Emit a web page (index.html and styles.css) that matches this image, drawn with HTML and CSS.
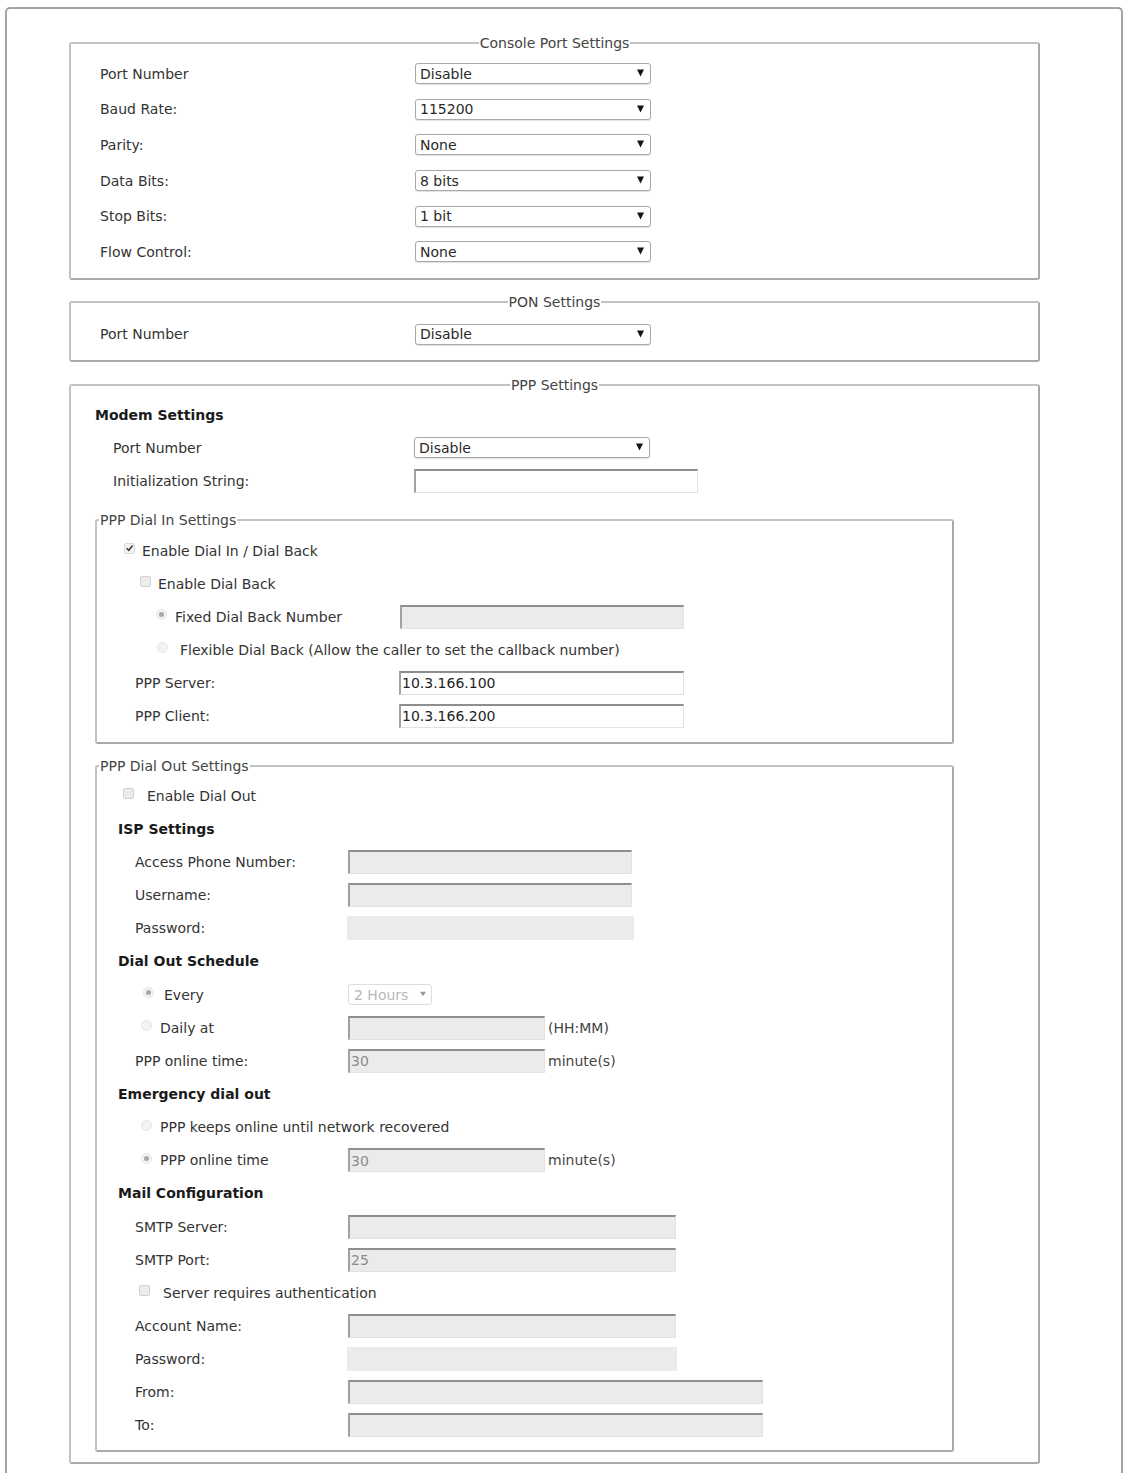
FILE: index.html
```html
<!DOCTYPE html>
<html lang="en">
<head>
<meta charset="utf-8">
<title>Serial Settings</title>
<link rel="stylesheet" href="styles.css">
</head>
<body>
<div class="page">

  <fieldset class="group console">
    <legend class="center">Console Port Settings</legend>
    <div class="row r-c"><span class="lbl lw-c">Port Number</span><span class="sel"><select><option>Disable</option></select><svg class="arr" viewBox="0 0 7 8"><path d="M0 0.5H7L3.5 7.5Z"/></svg></span></div>
    <div class="row r-c"><span class="lbl lw-c">Baud Rate:</span><span class="sel"><select><option>115200</option></select><svg class="arr" viewBox="0 0 7 8"><path d="M0 0.5H7L3.5 7.5Z"/></svg></span></div>
    <div class="row r-c"><span class="lbl lw-c">Parity:</span><span class="sel"><select><option>None</option></select><svg class="arr" viewBox="0 0 7 8"><path d="M0 0.5H7L3.5 7.5Z"/></svg></span></div>
    <div class="row r-c"><span class="lbl lw-c">Data Bits:</span><span class="sel"><select><option>8 bits</option></select><svg class="arr" viewBox="0 0 7 8"><path d="M0 0.5H7L3.5 7.5Z"/></svg></span></div>
    <div class="row r-c"><span class="lbl lw-c">Stop Bits:</span><span class="sel"><select><option>1 bit</option></select><svg class="arr" viewBox="0 0 7 8"><path d="M0 0.5H7L3.5 7.5Z"/></svg></span></div>
    <div class="row r-c"><span class="lbl lw-c">Flow Control:</span><span class="sel"><select><option>None</option></select><svg class="arr" viewBox="0 0 7 8"><path d="M0 0.5H7L3.5 7.5Z"/></svg></span></div>
  </fieldset>

  <fieldset class="group pon">
    <legend class="center">PON Settings</legend>
    <div class="row r-c"><span class="lbl lw-c">Port Number</span><span class="sel"><select><option>Disable</option></select><svg class="arr" viewBox="0 0 7 8"><path d="M0 0.5H7L3.5 7.5Z"/></svg></span></div>
  </fieldset>

  <fieldset class="group ppp">
    <legend class="center">PPP Settings</legend>
    <div class="row r-p head flush">Modem Settings</div>
    <div class="row r-p"><span class="lbl lw-m">Port Number</span><span class="sel"><select><option>Disable</option></select><svg class="arr" viewBox="0 0 7 8"><path d="M0 0.5H7L3.5 7.5Z"/></svg></span></div>
    <div class="row r-p"><span class="lbl lw-m">Initialization String:</span><input class="inp w284" type="text" value=""></div>

    <fieldset class="sub dial-in">
      <legend class="left">PPP Dial In Settings</legend>
      <div class="row r-p"><span class="lbl i27"><span class="cb on g7"><svg viewBox="0 0 10 10"><path d="M1.8 5.2L4.2 7.6L8.4 2.2"/></svg></span>Enable Dial In / Dial Back</span></div>
      <div class="row r-p"><span class="lbl i43"><span class="cb g7"></span>Enable Dial Back</span></div>
      <div class="row r-p"><span class="lbl lw-303 i59"><span class="rb on g8"></span>Fixed Dial Back Number</span><input class="inp w284" type="text" value="" disabled></div>
      <div class="row r-p"><span class="lbl i60"><span class="rb g12"></span>Flexible Dial Back (Allow the caller to set the callback number)</span></div>
      <div class="row r-p"><span class="lbl lw-302 i38">PPP Server:</span><input class="inp w285" type="text" value="10.3.166.100"></div>
      <div class="row r-p"><span class="lbl lw-302 i38">PPP Client:</span><input class="inp w285" type="text" value="10.3.166.200"></div>
    </fieldset>

    <fieldset class="sub dial-out">
      <legend class="left">PPP Dial Out Settings</legend>
      <div class="row r-o"><span class="lbl i26"><span class="cb g13"></span>Enable Dial Out</span></div>
      <div class="row r-o head">ISP Settings</div>
      <div class="row r-o"><span class="lbl lw-o i38">Access Phone Number:</span><input class="inp w284" type="text" value="" disabled></div>
      <div class="row r-o"><span class="lbl lw-o i38">Username:</span><input class="inp w284" type="text" value="" disabled></div>
      <div class="row r-o"><span class="lbl lw-o i38">Password:</span><input class="inp pw w287" type="password" value="" disabled></div>
      <div class="row r-o head">Dial Out Schedule</div>
      <div class="row r-o"><span class="lbl lw-o i46"><span class="rb on g10"></span>Every</span><span class="sel small"><select disabled><option>2 Hours</option></select><svg class="arr" viewBox="0 0 7 8"><path d="M0 1.5H7L3.5 6.5Z"/></svg></span></div>
      <div class="row r-o"><span class="lbl lw-o i44"><span class="rb g8"></span>Daily at</span><input class="inp w197" type="text" value="" disabled><span class="unit">(HH:MM)</span></div>
      <div class="row r-o"><span class="lbl lw-o i38">PPP online time:</span><input class="inp w197" type="text" value="30" disabled><span class="unit">minute(s)</span></div>
      <div class="row r-o head">Emergency dial out</div>
      <div class="row r-o"><span class="lbl i44"><span class="rb g8"></span>PPP keeps online until network recovered</span></div>
      <div class="row r-o"><span class="lbl lw-o i44"><span class="rb on g8"></span>PPP online time</span><input class="inp w197" type="text" value="30" disabled><span class="unit">minute(s)</span></div>
      <div class="row r-o head">Mail Configuration</div>
      <div class="row r-o"><span class="lbl lw-o i38">SMTP Server:</span><input class="inp w328" type="text" value="" disabled></div>
      <div class="row r-o"><span class="lbl lw-o i38">SMTP Port:</span><input class="inp w328" type="text" value="25" disabled></div>
      <div class="row r-o"><span class="lbl i42"><span class="cb g13"></span>Server requires authentication</span></div>
      <div class="row r-o"><span class="lbl lw-o i38">Account Name:</span><input class="inp w328" type="text" value="" disabled></div>
      <div class="row r-o"><span class="lbl lw-o i38">Password:</span><input class="inp pw w330" type="password" value="" disabled></div>
      <div class="row r-o"><span class="lbl lw-o i38">From:</span><input class="inp w415" type="text" value="" disabled></div>
      <div class="row r-o"><span class="lbl lw-o i38">To:</span><input class="inp w415" type="text" value="" disabled></div>
    </fieldset>
  </fieldset>

</div>
</body>
</html>
```

FILE: styles.css
```css
html, body {
  margin: 0;
  padding: 0;
  background: #ffffff;
}

body {
  font-family: "DejaVu Sans", Verdana, sans-serif;
  font-size: 14px;
  color: #333333;
}

.page {
  margin: 7px 1px 0 5px;
  border: 2px solid #a4a4a4;
  border-bottom: none;
  border-radius: 5px 5px 0 0;
  padding: 26px 0 20px;
  min-height: 1450px;
  box-sizing: border-box;
}

/* fieldsets */
.group,
.sub {
  box-sizing: border-box;
  border: 2px solid #c2c2c2;
  border-right-color: #a9a9a9;
  border-bottom-color: #a9a9a9;
  border-radius: 3px;
  min-inline-size: 0;
}

.group {
  width: 971px;
  margin: 0 0 15px 62px;
  padding: 4px 29px 8px;
}

.group.console {
  padding: 5px 29px 8px;
  margin-bottom: 14px;
}

.group.pon {
  padding: 7px 29px 8px;
}

.group.ppp {
  padding: 5px 24px 10px;
  margin-bottom: 0;
}

.sub {
  width: 859px;
  margin: 15px 0 0 0;
  padding: 6px 0 10px 0;
}

.sub.dial-out {
  margin-top: 14px;
  padding: 5px 0 8px 0;
}

legend {
  font-size: 14px;
  line-height: 16px;
  color: #444444;
  padding: 0 1px;
}

legend.center {
  margin-left: auto;
  margin-right: auto;
}

legend.left {
  margin-left: 2px;
}

/* rows */
.row {
  display: flex;
  align-items: center;
  white-space: nowrap;
}

.r-c { height: 35.6px; }
.r-p { height: 33px; }
.r-o { height: 33.15px; }

.head {
  font-weight: bold;
  color: #1a1a1a;
  padding-left: 21px;
}

.head.flush {
  padding-left: 0;
}

.lbl {
  flex: none;
  box-sizing: border-box;
  display: flex;
  align-items: center;
}

.lw-c { width: 315px; }
.lw-m { width: 319px; padding-left: 18px; }
.lw-302 { width: 302px; }
.lw-303 { width: 303px; }
.lw-o { width: 251px; }

.i26 { padding-left: 26px; }
.i27 { padding-left: 27px; }
.i38 { padding-left: 38px; }
.i42 { padding-left: 42px; }
.i43 { padding-left: 43px; }
.i44 { padding-left: 44px; }
.i46 { padding-left: 46px; }
.i59 { padding-left: 59px; }
.i60 { padding-left: 60px; }

/* select */
.sel {
  position: relative;
  display: inline-block;
  width: 236px;
  height: 21px;
  flex: none;
}

.sel select {
  appearance: none;
  -webkit-appearance: none;
  box-sizing: border-box;
  width: 100%;
  height: 100%;
  margin: 0;
  border: 1px solid #a8a8a8;
  border-radius: 3px;
  background: #ffffff;
  box-shadow: 0 1px 1px rgba(0, 0, 0, 0.12);
  font-family: "DejaVu Sans", Verdana, sans-serif;
  font-size: 14px;
  color: #2a2a2a;
  padding: 0 4px;
}

.sel .arr {
  position: absolute;
  right: 7px;
  top: 6px;
  width: 7px;
  height: 8px;
  fill: #151515;
  pointer-events: none;
}

.sel.small {
  width: 84px;
  height: 21px;
}

.sel.small select {
  border-color: #cfcfcf;
  box-shadow: none;
  color: #9a9a9a;
  background: #ffffff;
  padding-left: 5px;
}

.sel.small .arr {
  right: 6px;
  top: 6px;
  width: 6px;
  fill: #9a9a9a;
}

/* text inputs */
.inp {
  flex: none;
  box-sizing: border-box;
  height: 24px;
  margin: 0;
  border-style: solid;
  border-width: 2px 1px 1px 2px;
  border-color: #8e8e8e #e2e2e2 #e2e2e2 #a2a2a2;
  background: #ffffff;
  font-family: "DejaVu Sans", Verdana, sans-serif;
  font-size: 14px;
  color: #222222;
  padding: 0 1px;
}

.inp:disabled {
  background: #ebebeb;
  color: #8c8c8c;
}

.inp.pw {
  border: none;
  margin-left: -1px;
}

.w197 { width: 197px; }
.w284 { width: 284px; }
.w285 { width: 285px; }
.w287 { width: 287px; }
.w328 { width: 328px; }
.w330 { width: 330px; }
.w415 { width: 415px; }

.unit {
  margin-left: 3px;
  color: #444444;
}

/* checkboxes and radios */
.cb {
  flex: none;
  box-sizing: border-box;
  width: 11px;
  height: 11px;
  margin-bottom: 5px;
  border: 1px solid #d2d2d2;
  border-radius: 2px;
  background: #ececec;
  display: flex;
  align-items: center;
  justify-content: center;
}

.cb svg {
  width: 10px;
  height: 10px;
  fill: none;
  stroke: #3a3a3a;
  stroke-width: 1.7;
}

.cb.on {
  background: #f4f4f4;
  border-color: #d8d8d8;
}

.rb {
  flex: none;
  box-sizing: border-box;
  width: 11px;
  height: 11px;
  margin-bottom: 4px;
  border: 1px solid #e6e6e6;
  border-radius: 50%;
  background: #f3f3f3;
  display: flex;
  align-items: center;
  justify-content: center;
}

.rb.on::after {
  content: "";
  width: 5px;
  height: 5px;
  border-radius: 50%;
  background: #a8a8a8;
}

.g7 { margin-right: 7px; }
.g8 { margin-right: 8px; }
.g10 { margin-right: 10px; }
.g12 { margin-right: 12px; }
.g13 { margin-right: 13px; }
```
